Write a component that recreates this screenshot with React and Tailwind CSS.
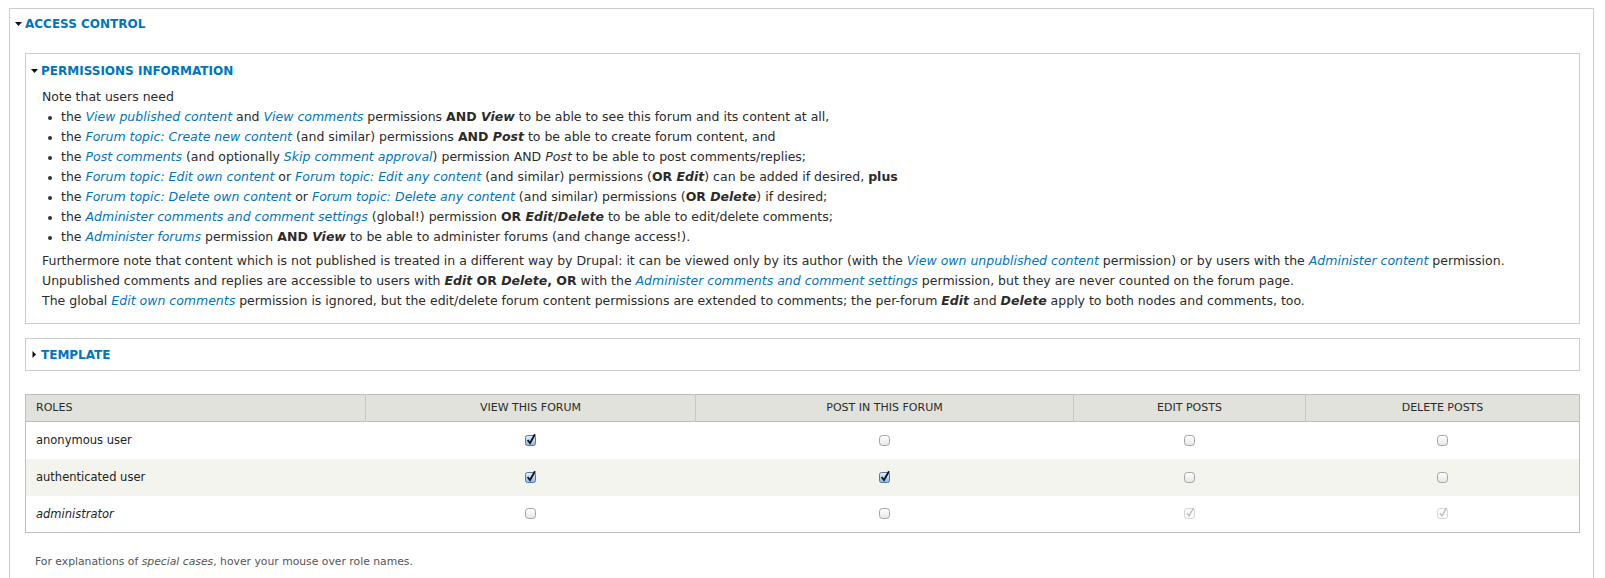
import React from 'react';

const A = ({ children }) => <a className="text-[#0074bd] italic">{children}</a>;
const B = ({ children }) => <strong className="font-bold">{children}</strong>;

function Caret({ open }) {
  if (open) {
    return (
      <svg width="7" height="4" viewBox="0 0 7 4" className="mr-[3px] shrink-0">
        <path d="M0 0h7L3.5 4z" fill="#111" />
      </svg>
    );
  }
  return (
    <svg width="7" height="7" viewBox="0 0 7 7" className="mr-[3px] shrink-0">
      <path d="M1.5 0v7L5 3.5z" fill="#111" />
    </svg>
  );
}

function Checkbox({ checked, disabled }) {
  if (disabled) {
    return (
      <svg width="13" height="13" viewBox="0 0 13 13" className="inline-block">
        <rect x="1.5" y="2.5" width="10" height="10" rx="2.5" fill="#fbfbfb" stroke="#d6d6d6" />
        <path d="M3.8 7.2 L6 9.8 L10.5 2" fill="none" stroke="#b8b8b8" strokeWidth="1.3" />
      </svg>
    );
  }
  if (checked) {
    return (
      <svg width="13" height="13" viewBox="0 0 13 13" className="inline-block">
        <defs>
          <linearGradient id="cb-on" x1="0" y1="0" x2="0" y2="1">
            <stop offset="0" stopColor="#e6f2fd" />
            <stop offset="1" stopColor="#88b9e9" />
          </linearGradient>
        </defs>
        <rect x="1.5" y="2.5" width="10" height="10" rx="2" fill="url(#cb-on)" stroke="#55799f" />
        <path d="M3.6 7 L6 10 L11 1.2" fill="none" stroke="#161616" strokeWidth="1.9" />
      </svg>
    );
  }
  return (
    <svg width="13" height="13" viewBox="0 0 13 13" className="inline-block">
      <defs>
        <linearGradient id="cb-off" x1="0" y1="0" x2="0" y2="1">
          <stop offset="0" stopColor="#ffffff" />
          <stop offset="1" stopColor="#e6e6e6" />
        </linearGradient>
      </defs>
      <rect x="1.5" y="2.5" width="10" height="10" rx="3" fill="url(#cb-off)" stroke="#a2a2a2" />
    </svg>
  );
}

function Item({ children }) {
  return (
    <li className="flex">
      <span className="w-[4px] h-[4px] rounded-full bg-[#333] mt-[9px] ml-[6px] mr-[9px] shrink-0" />
      <span>{children}</span>
    </li>
  );
}

const roles = [
  { name: 'anonymous user', perms: [true, false, false, false] },
  { name: 'authenticated user', perms: [true, true, false, false], shade: true },
  { name: 'administrator', perms: [false, false, 'd', 'd'], italic: true },
];

export default function App() {
  return (
    <div className="w-[1605px] h-[578px] overflow-hidden bg-white pt-[8px] pl-[9px] pr-[11px] font-['DejaVu_Sans',sans-serif] text-[12.5px] leading-[20px] text-[#2b2b2b]">
      <div className="border border-[#ccc] pb-[20px]">
        <div className="h-[30px] pl-[5px] flex items-center">
          <Caret open />
          <span className="text-[#0074bd] font-bold text-[12px] uppercase">Access control</span>
        </div>

        <div className="pl-[15px] pr-[13px] mt-[14px]">
          {/* permissions info */}
          <div className="border border-[#ccc]">
            <div className="h-[33px] pl-[5px] flex items-center">
              <Caret open />
              <span className="text-[#0074bd] font-bold text-[12px] uppercase">Permissions information</span>
            </div>
            <div className="pl-[16px] pb-[12px]">
              <p>Note that users need</p>
              <ul>
                <Item>the <A>View published content</A> and <A>View comments</A> permissions <B>AND <em>View</em></B> to be able to see this forum and its content at all,</Item>
                <Item>the <A>Forum topic: Create new content</A> (and similar) permissions <B>AND <em>Post</em></B> to be able to create forum content, and</Item>
                <Item>the <A>Post comments</A> (and optionally <A>Skip comment approval</A>) permission AND <em>Post</em> to be able to post comments/replies;</Item>
                <Item>the <A>Forum topic: Edit own content</A> or <A>Forum topic: Edit any content</A> (and similar) permissions (<B>OR <em>Edit</em></B>) can be added if desired, <B>plus</B></Item>
                <Item>the <A>Forum topic: Delete own content</A> or <A>Forum topic: Delete any content</A> (and similar) permissions (<B>OR <em>Delete</em></B>) if desired;</Item>
                <Item>the <A>Administer comments and comment settings</A> (global!) permission <B>OR <em>Edit</em>/<em>Delete</em></B> to be able to edit/delete comments;</Item>
                <Item>the <A>Administer forums</A> permission <B>AND <em>View</em></B> to be able to administer forums (and change access!).</Item>
              </ul>
              <div className="mt-[4px]">
                <p>Furthermore note that content which is not published is treated in a different way by Drupal: it can be viewed only by its author (with the <A>View own unpublished content</A> permission) or by users with the <A>Administer content</A> permission.</p>
                <p>Unpublished comments and replies are accessible to users with <B><em>Edit</em> OR <em>Delete</em>, OR</B> with the <A>Administer comments and comment settings</A> permission, but they are never counted on the forum page.</p>
                <p>The global <A>Edit own comments</A> permission is ignored, but the edit/delete forum content permissions are extended to comments; the per-forum <B><em>Edit</em></B> and <B><em>Delete</em></B> apply to both nodes and comments, too.</p>
              </div>
            </div>
          </div>

          {/* template, collapsed */}
          <div className="border border-[#ccc] mt-[14px]">
            <div className="h-[31px] pl-[5px] flex items-center">
              <Caret />
              <span className="text-[#0074bd] font-bold text-[12px] uppercase">Template</span>
            </div>
          </div>

          <table className="mt-[23px] w-full border-collapse border border-[#bebfb9] table-fixed">
            <colgroup>
              <col className="w-[340px]" />
              <col className="w-[330px]" />
              <col className="w-[378px]" />
              <col className="w-[232px]" />
              <col className="w-[274px]" />
            </colgroup>
            <thead>
              <tr className="bg-[#e1e2dc] h-[27px] border-b border-[#bebfb9] text-[11px] uppercase">
                <th className="text-left font-normal pl-[10px]">Roles</th>
                <th className="font-normal border-l border-[#c8c9c3]">View this forum</th>
                <th className="font-normal border-l border-[#c8c9c3]">Post in this forum</th>
                <th className="font-normal border-l border-[#c8c9c3]">Edit posts</th>
                <th className="font-normal border-l border-[#c8c9c3]">Delete posts</th>
              </tr>
            </thead>
            <tbody>
              {roles.map((r) => (
                <tr key={r.name} className={`h-[37px] ${r.shade ? 'bg-[#f3f4ee]' : 'bg-white'}`}>
                  <td className={`pl-[10px] text-[11.5px] text-[#222] ${r.italic ? 'italic' : ''}`}>{r.name}</td>
                  {r.perms.map((p, i) => (
                    <td key={i} className="text-center align-middle">
                      <span className="inline-flex pt-[4px]">
                        <Checkbox checked={p === true} disabled={p === 'd'} />
                      </span>
                    </td>
                  ))}
                </tr>
              ))}
            </tbody>
          </table>

          <p className="mt-[20px] pl-[10px] text-[10.8px] leading-[18px] text-[#555]">
            For explanations of <em>special cases</em>, hover your mouse over role names.
          </p>
        </div>
      </div>
    </div>
  );
}
